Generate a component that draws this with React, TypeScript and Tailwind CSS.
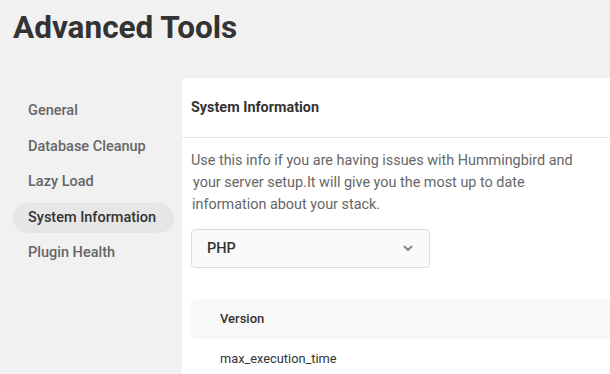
import React from "react";

const navItems = ["General", "Database Cleanup", "Lazy Load", "System Information", "Plugin Health"];

export default function App() {
  return (
    <div className="w-[610px] h-[374px] overflow-hidden bg-[#f1f1f1] font-['Roboto',sans-serif] text-[#333]">
      <h1 className="pl-[13px] pt-[8px] text-[31.5px] font-bold leading-[40px] text-[#333]">Advanced Tools</h1>
      <div className="mt-[30px] flex">
        <nav className="w-[182px] shrink-0 pl-[13px] pr-[8px] pt-[18px] flex flex-col gap-[5.5px]">
          {navItems.map((item) => (
            <div
              key={item}
              className={
                item === "System Information"
                  ? "h-[30px] flex items-center px-[15px] rounded-full bg-[#e6e6e6] text-[14.5px] font-medium text-[#333]"
                  : "h-[30px] flex items-center px-[15px] text-[14.5px] font-medium text-[#666]"
              }
            >
              {item}
            </div>
          ))}
        </nav>
        <div className="flex-1 h-[300px] bg-white rounded-tl-[4px]">
          <div className="h-[60px] flex items-center pl-[9px] pt-[1px] border-b border-[#e6e6e6]">
            <h2 className="text-[14.4px] font-bold leading-[30px] text-[#333]">System Information</h2>
          </div>
          <div className="pl-[9px] pt-[12px]">
            <p className="text-[14.4px] leading-[22px] text-[#666]">
              <span className="block">Use this info if you are having issues with Hummingbird and</span>
              <span className="block pl-[2px]">your server setup.It will give you the most up to date</span>
              <span className="block pl-[1px]">information about your stack.</span>
            </p>
            <div className="mt-[13px] w-[239px] h-[39px] flex items-center justify-between pl-[15px] pr-[16px] border border-[#ddd] rounded-[4px] bg-[#fafafa]">
              <span className="text-[14.5px] font-medium text-[#333]">PHP</span>
              <svg width="10" height="7" viewBox="0 0 10 7" fill="none">
                <path d="M1.5 1.5l3.5 3.5 3.5-3.5" stroke="#888" strokeWidth="2" strokeLinecap="round" strokeLinejoin="round" />
              </svg>
            </div>
            <div className="mt-[31px] h-[40px] flex items-center pl-[29px] bg-[#f8f8f8] rounded-l-[4px]">
              <span className="text-[13px] font-medium text-[#333]">Version</span>
            </div>
            <div className="h-[40px] flex items-center pl-[29px]">
              <span className="text-[12.8px] text-[#333]">max_execution_time</span>
            </div>
          </div>
        </div>
      </div>
    </div>
  );
}
